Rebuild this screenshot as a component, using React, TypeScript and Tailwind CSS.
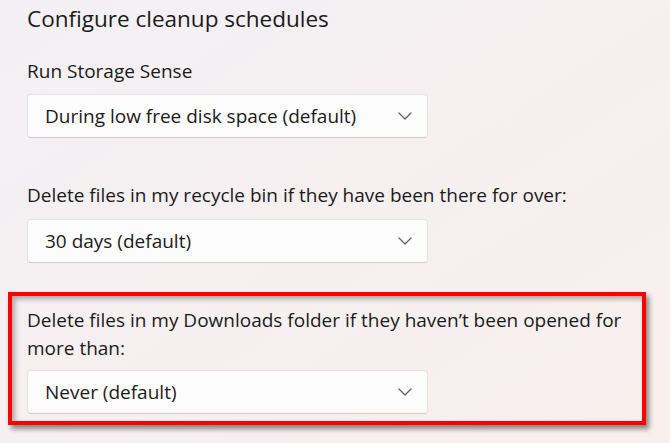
import React from "react";

function Chevron() {
  return (
    <svg width="14" height="8" viewBox="0 0 14 8" fill="none" className="shrink-0">
      <path d="M1 1 L7 7 L13 1" stroke="#5f5f5f" strokeWidth="1.2" strokeLinecap="round" strokeLinejoin="round" />
    </svg>
  );
}

function Dropdown({ value }: { value: string }) {
  return (
    <div className="flex h-[44px] w-[401px] items-center justify-between rounded-[4px] border border-[#e6e2e2] border-b-[#cfcbcb] bg-[#fdfcfc] pl-[17px] pr-[15px]">
      <span className="text-[19px] leading-[24px] text-[#1b1b1b]">{value}</span>
      <Chevron />
    </div>
  );
}

export default function App() {
  return (
    <div
      className="flex h-[443px] w-[670px] flex-col overflow-hidden bg-gradient-to-br from-[#f3f0f4] to-[#f9efed] text-[#1b1b1b]"
      style={{ fontFamily: '"Open Sans", "Noto Sans", sans-serif' }}
    >
      <div className="flex flex-col pl-[27px]">
        <h1 className="mt-[3px] text-[22.5px] font-normal leading-[32px]">Configure cleanup schedules</h1>
        <div className="mt-[24px] text-[19px] leading-[24px]">Run Storage Sense</div>
        <div className="mt-[11px]">
          <Dropdown value="During low free disk space (default)" />
        </div>
        <div className="mt-[45px] text-[19px] leading-[24px]">
          Delete files in my recycle bin if they have been there for over:
        </div>
        <div className="mt-[12px]">
          <Dropdown value="30 days (default)" />
        </div>
      </div>
      <div className="ml-[8px] mt-[29px] w-[638px] border-4 border-[#ff0000] pb-[7px] pl-[15px] pt-[10px] shadow-[3px_4px_5px_rgba(0,0,0,0.45),inset_3px_3px_5px_rgba(0,0,0,0.3)]">
        <div className="whitespace-nowrap text-[19px] leading-[28px]">
          Delete files in my Downloads folder if they haven’t been opened for
          <br />
          more than:
        </div>
        <div className="mt-[8px]">
          <Dropdown value="Never (default)" />
        </div>
      </div>
    </div>
  );
}
